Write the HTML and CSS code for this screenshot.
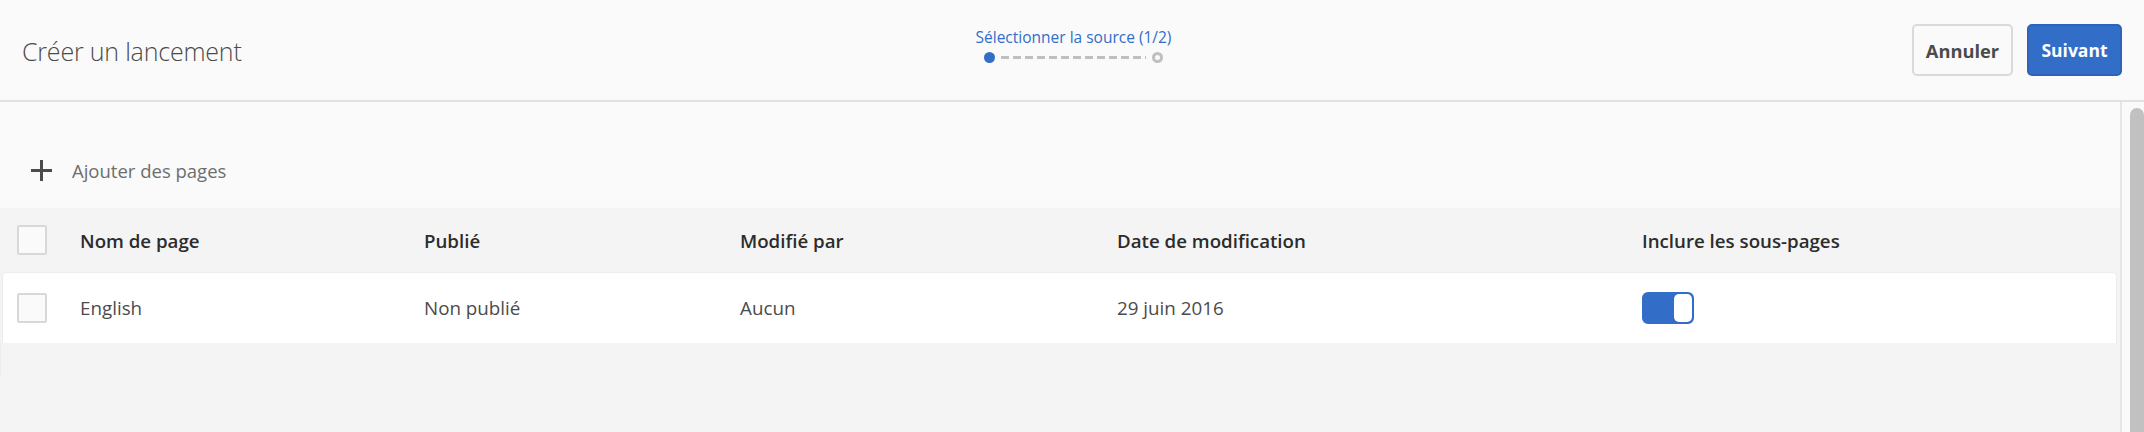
FILE: index.html
```html
<!DOCTYPE html>
<html lang="fr">
<head>
<meta charset="utf-8">
<title>Créer un lancement</title>
<link rel="stylesheet" href="styles.css">
</head>
<body>
<header class="topbar">
  <h1 class="title">Créer un lancement</h1>
  <div class="wizard">
    <div class="step-label">Sélectionner la source (1/2)</div>
    <div class="steps">
      <span class="dot dot-active"></span>
      <span class="dashes"></span>
      <span class="dot dot-todo"></span>
    </div>
  </div>
  <div class="actions">
    <button class="btn btn-quiet">Annuler</button>
    <button class="btn btn-primary">Suivant</button>
  </div>
</header>
<div class="body-wrap">
  <main class="content">
    <div class="toolbar">
      <span class="plus">
        <svg width="21" height="21" viewBox="0 0 21 21"><path d="M9 0h3v9h9v3h-9v9H9v-9H0V9h9z" fill="#4b4b4b"/></svg>
      </span>
      <span class="add-label">Ajouter des pages</span>
    </div>
    <div class="table">
      <div class="row head">
        <div class="cell check"><span class="checkbox"></span></div>
        <div class="cell">Nom de page</div>
        <div class="cell">Publié</div>
        <div class="cell">Modifié par</div>
        <div class="cell">Date de modification</div>
        <div class="cell">Inclure les sous-pages</div>
      </div>
      <div class="row item">
        <div class="cell check"><span class="checkbox"></span></div>
        <div class="cell">English</div>
        <div class="cell">Non publié</div>
        <div class="cell">Aucun</div>
        <div class="cell">29 juin 2016</div>
        <div class="cell"><span class="switch"><span class="knob"></span></span></div>
      </div>
      <div class="table-rest"></div>
    </div>
  </main>
  <div class="scrollbar"><div class="thumb"></div></div>
</div>
</body>
</html>
```

FILE: styles.css
```css
html, body {
  margin: 0;
  padding: 0;
  height: 100%;
}
body {
  font-family: "Open Sans", "Noto Sans", sans-serif;
  background: #f4f4f4;
  overflow: hidden;
  width: 2144px;
  height: 432px;
}
.topbar {
  height: 100px;
  background: #fafafa;
  border-bottom: 2px solid #e1e1e1;
  display: grid;
  grid-template-columns: 1fr auto 1fr;
  align-items: center;
  padding: 0 22px 0 22px;
  box-sizing: content-box;
  width: calc(2144px - 44px);
}
.title {
  margin: 0;
  font-size: 25px;
  font-weight: 300;
  color: #4b4b4b;
  letter-spacing: -0.2px;
  margin-top: 2px;
}
.wizard {
  display: flex;
  flex-direction: column;
  align-items: center;
  margin-top: -12px;
  margin-left: 3px;
}
.step-label {
  font-size: 15.5px;
  color: #326ec8;
  line-height: 22px;
}
.steps {
  display: flex;
  align-items: center;
  margin-top: 4px;
}
.dot {
  width: 11px;
  height: 11px;
  border-radius: 50%;
  box-sizing: border-box;
}
.dot-active {
  background: #326ec8;
}
.dot-todo {
  border: 3px solid #bfbfbf;
}
.dashes {
  width: 145px;
  height: 3px;
  margin: 0 6px;
  background: repeating-linear-gradient(to right, #bfbfbf 0 8px, transparent 8px 12px);
}
.actions {
  display: flex;
  justify-content: flex-end;
  gap: 14px;
}
.btn {
  height: 52px;
  border-radius: 5px;
  font-family: "Open Sans", sans-serif;
  font-weight: 700;
  padding: 0 8px;
  cursor: pointer;
}
.btn-quiet {
  width: 101px;
  background: #fafafa;
  border: 2px solid #dadada;
  color: #4b4b4b;
  font-size: 18.3px;
}
.btn-primary {
  width: 95px;
  background: #326ec8;
  border: 2px solid #2d64b8;
  color: #ffffff;
  font-size: 17.5px;
}
.body-wrap {
  display: flex;
  height: 330px;
}
.content {
  flex: 1;
  border-right: 2px solid #e6e6e6;
  background: #f4f4f4;
  display: flex;
  flex-direction: column;
}
.toolbar {
  height: 106px;
  background: #fafafa;
  display: flex;
  align-items: center;
  padding-left: 31px;
  padding-top: 30px;
  box-sizing: border-box;
}
.plus {
  display: flex;
  width: 21px;
  height: 21px;
}
.add-label {
  margin-left: 20px;
  font-size: 18.5px;
  color: #6e6e6e;
}
.table {
  display: flex;
  flex-direction: column;
  flex: 1;
}
.row {
  display: grid;
  grid-template-columns: 80px 344px 316px 377px 525px 1fr;
  align-items: center;
}
.head {
  height: 64px;
  font-weight: 600;
  font-size: 18.7px;
  color: #2c2c2c;
}
.item {
  height: 71px;
  background: #ffffff;
  margin: 0 3px 0 2px;
  border: 1px solid #ececec;
  border-bottom: none;
  border-radius: 5px 5px 0 0;
  box-sizing: border-box;
  font-size: 18.8px;
  color: #4b4b4b;
  grid-template-columns: 77px 344px 316px 377px 525px 1fr;
}
.item .cell.check {
  padding-left: 14px;
}
.check {
  padding-left: 17px;
  display: flex;
}
.checkbox {
  width: 30px;
  height: 30px;
  box-sizing: border-box;
  border: 2px solid #d8d8d8;
  border-radius: 2px;
  background: #fafafa;
}
.switch {
  display: flex;
  justify-content: flex-end;
  width: 52px;
  height: 32px;
  box-sizing: border-box;
  border: 2px solid #326ec8;
  border-radius: 6px;
  background: #326ec8;
}
.knob {
  width: 18px;
  height: 28px;
  box-sizing: border-box;
  background: #ffffff;
  border-radius: 5px;
}
.table-rest {
  height: 34px;
  border-left: 1px solid #ececec;
}
.scrollbar {
  width: 22px;
  background: #fafafa;
  display: flex;
  justify-content: flex-end;
  padding-top: 6px;
  box-sizing: border-box;
}
.thumb {
  width: 14px;
  height: 100%;
  background: #c1c1c1;
  border-radius: 7px 7px 0 0;
}
```
